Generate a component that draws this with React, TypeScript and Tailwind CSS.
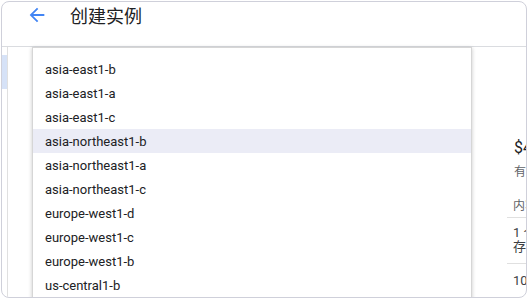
const zones = [
  'asia-east1-b',
  'asia-east1-a',
  'asia-east1-c',
  'asia-northeast1-b',
  'asia-northeast1-a',
  'asia-northeast1-c',
  'europe-west1-d',
  'europe-west1-c',
  'europe-west1-b',
  'us-central1-b',
  'us-central1-c',
  'us-central1-f',
];

const selected = 'asia-northeast1-b';

function BackArrow() {
  return (
    <svg width="22" height="22" viewBox="0 0 24 24" fill="#4285f4">
      <path d="M20 11H7.83l5.59-5.59L12 4l-8 8 8 8 1.41-1.41L7.83 13H20v-2z" />
    </svg>
  );
}

export default function App() {
  return (
    <div className="w-[530px] h-[300px] bg-white pt-[1px] pl-[1px] font-['Roboto','Noto_Sans_CJK_SC',sans-serif]">
      <div className="relative w-[526px] h-[297px] border border-[#cfd0da] rounded-lg overflow-hidden flex flex-col bg-white">
        {/* header */}
        <div className="h-[45px] shrink-0 flex items-start border-b border-[#dadce0]">
          <div className="ml-[24px] mt-[2px] w-[22px] h-[22px] flex items-center">
            <BackArrow />
          </div>
          <h1 className="ml-[22px] mt-[1px] text-[18px] leading-[24px] text-[#202124] font-['Noto_Sans_CJK_SC',sans-serif]">
            创建实例
          </h1>
        </div>

        {/* body */}
        <div className="flex flex-1 min-h-0">
          <div className="w-[6px] shrink-0 border-r border-[#e0e0e0] pt-[8px]">
            <div className="h-[34px] w-[5px] bg-[#d6e2f7]" />
          </div>
          <div className="flex-1" />
          <aside className="w-[53px] shrink-0 pl-[34px] pt-[89px] whitespace-nowrap overflow-hidden">
            <div className="pl-[7px] text-[16px] leading-[24px] text-[#202124]">$48.54</div>
            <div className="pl-[7px] mt-[4px] text-[12px] leading-[16px] text-[#5f6368]">有效价格</div>
            <div className="pl-[6px] mt-[18px] pb-[3px] border-b border-[#e0e0e0] text-[12px] leading-[16px] text-[#5f6368]">
              内容
            </div>
            <div className="pl-[6px] pt-[8px] pb-[9px] border-b border-[#e0e0e0] text-[13px] leading-[14px] text-[#3c4043]">
              <div>1 个 vCPU</div>
              <div>存储</div>
            </div>
            <div className="pl-[6px] pt-[9px] text-[13px] leading-[16px] text-[#3c4043]">10 GB</div>
          </aside>
        </div>

        {/* zone menu */}
        <div className="absolute left-[30px] top-[45px] w-[440px] h-[320px] bg-white border border-[#d6d6d6] shadow-[0_1px_4px_rgba(0,0,0,0.22)] pt-[9px]">
          {zones.map((zone) => (
            <div
              key={zone}
              className={`h-[24px] flex items-center pl-[12px] pt-[2px] text-[13px] text-[#202124] ${
                zone === selected ? 'bg-[#ebecf6]' : ''
              }`}
            >
              {zone}
            </div>
          ))}
        </div>
      </div>
    </div>
  );
}
